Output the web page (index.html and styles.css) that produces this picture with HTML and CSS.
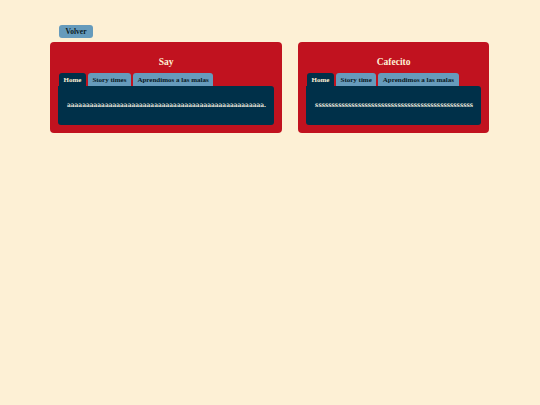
FILE: index.html
```html
<!DOCTYPE html>
<html lang="es">
<head>
<meta charset="utf-8">
<title>Say / Cafecito</title>
<link rel="stylesheet" href="styles.css">
</head>
<body>
<div class="page">
  <button class="back">Volver</button>
  <div class="cards">
    <section class="card">
      <h2 class="card-title">Say</h2>
      <div class="tabs">
        <span class="tab active">Home</span>
        <span class="tab">Story times</span>
        <span class="tab">Aprendimos a las malas</span>
      </div>
      <div class="panel">aaaaaaaaaaaaaaaaaaaaaaaaaaaaaaaaaaaaaaaaaaaaaaaaaaaa.</div>
    </section>
    <section class="card">
      <h2 class="card-title">Cafecito</h2>
      <div class="tabs">
        <span class="tab active">Home</span>
        <span class="tab">Story time</span>
        <span class="tab">Aprendimos a las malas</span>
      </div>
      <div class="panel">ssssssssssssssssssssssssssssssssssssssssssssssss</div>
    </section>
  </div>
</div>
</body>
</html>
```

FILE: styles.css
```css
html, body {
  margin: 0;
  padding: 0;
  background: #fdf0d5;
}

body {
  font-family: "Liberation Serif", "DejaVu Serif", serif;
  color: #003049;
}

.page {
  padding: 25px 0 0 50px;
}

.back {
  display: block;
  margin: 0 0 4px 9px;
  height: 13px;
  width: 34px;
  padding: 0;
  border: none;
  border-radius: 3px;
  background: #669bbc;
  color: #0d1b24;
  font-family: inherit;
  font-weight: bold;
  font-size: 7.5px;
  line-height: 13px;
}

.cards {
  display: flex;
  align-items: flex-start;
  gap: 16px;
}

.card {
  background: #c1121f;
  border-radius: 4px;
  padding: 14px 8px 8px;
}

.card-title {
  margin: 0 0 5px;
  text-align: center;
  color: #fdf0d5;
  font-size: 9.5px;
  line-height: 12px;
  font-weight: bold;
}

.tabs {
  display: flex;
  gap: 2px;
  padding-left: 1px;
}

.tab {
  height: 13px;
  line-height: 14px;
  padding: 0 4.5px;
  border-radius: 3px 3px 0 0;
  background: #669bbc;
  color: #0b1a24;
  font-size: 7px;
  font-weight: bold;
}

.tab.active {
  background: #003049;
  color: #fdf0d5;
}

.panel {
  background: #003049;
  border-radius: 0 3px 3px 3px;
  padding: 14px 8px 14px 9px;
  color: #e6e4dc;
  font-family: "DejaVu Serif", serif;
  font-stretch: condensed;
  font-weight: bold;
  font-size: 6.5px;
  line-height: 11px;
  white-space: nowrap;
}
```
